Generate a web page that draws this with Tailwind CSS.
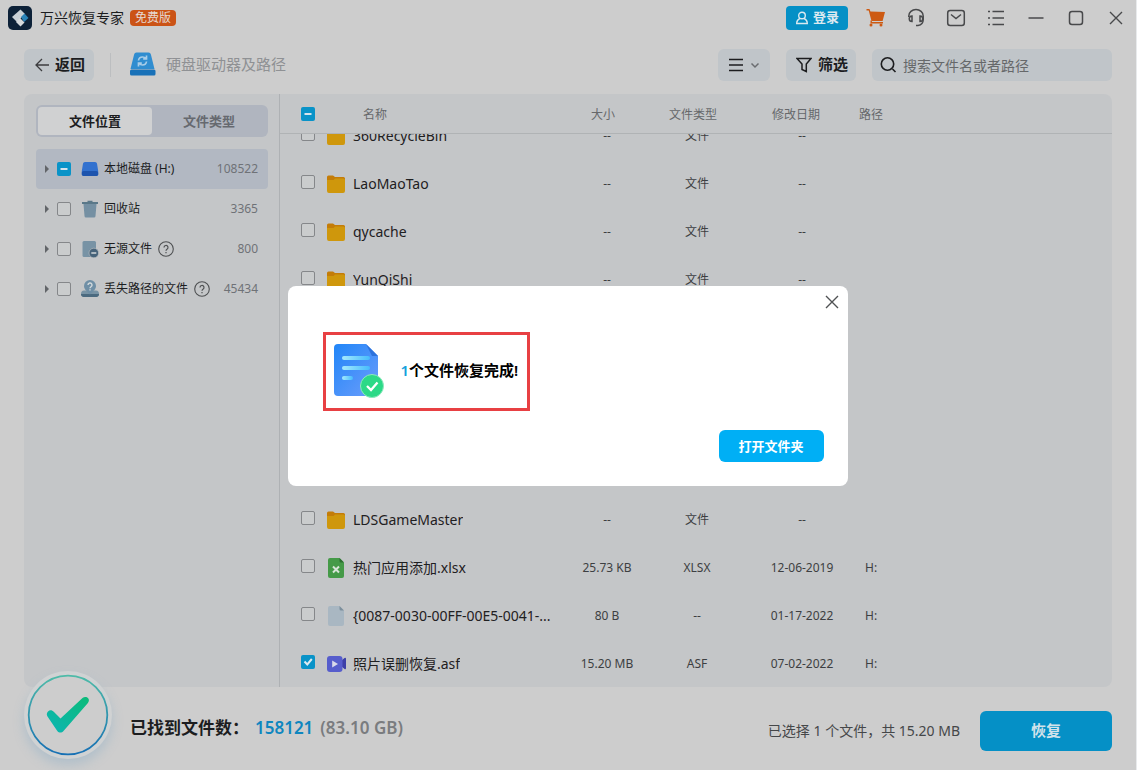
<!DOCTYPE html>
<html lang="zh-CN">
<head>
<meta charset="utf-8">
<meta name="viewport" content="width=device-width, initial-scale=1">
<title>万兴恢复专家</title>
<script src="https://cdn.jsdelivr.net/npm/@tailwindcss/browser@4"></script>
</head>
<body class="relative flex h-screen flex-col overflow-hidden border-r border-[#e8eaec] bg-[#cdcdcd] font-['Noto_Sans','Noto_Sans_CJK_SC',sans-serif] text-sm text-[#1c1d1f]">

<svg class="hidden" aria-hidden="true">
  <symbol id="folder" viewBox="0 0 18 18"><path d="M0 2a1.500 1.500 0 0 1 1.500-1.500H6L8 2h8.500A1.500 1.500 0 0 1 18 3.500V9H0z" fill="#c47c08"/><path d="M0 5h6.500l1.500-1.500h8.500a1.500 1.500 0 0 1 1.500 1.500V16a2 2 0 0 1-2 2H2a2 2 0 0 1-2-2z" fill="#cf970c"/></symbol>
  <symbol id="minus" viewBox="0 0 14 14"><path d="M3.500 7h7" stroke="#d5e4ec" stroke-width="1.800" fill="none"/></symbol>
  <symbol id="help" viewBox="0 0 16 16"><circle cx="8" cy="8" r="7.300" fill="none" stroke="#4e5052" stroke-width="1.100"/><path d="M6 6.500a2 2 0 1 1 3 1.700c-.7.500-1 .8-1 1.600M8 11v1.200" fill="none" stroke="#4e5052" stroke-width="1.200"/></symbol>
</svg>

<header class="flex h-[35px] shrink-0 items-center justify-between pr-3 pl-2">
  <div class="flex items-center">
    <svg class="size-6" viewBox="0 0 24 24"><rect width="24" height="24" rx="5" fill="#0d2138"/><path d="M12.500 3.500 17 8l-8 8-5-5z" fill="#c9d0d6"/><path d="m13 11 3.500-3.500L20.500 12 16 16z" fill="#2b83b8"/><path d="m12 12 4.500 4.500-4 4L8 16z" fill="#d6dadd"/></svg>
    <h1 class="ml-2 text-sm">万兴恢复专家</h1>
    <span class="ml-1.5 flex h-4 items-center rounded-sm bg-[#cb5316] px-[5px] text-xs text-[#e6d9d2]">免费版</span>
  </div>
  <div class="flex items-center text-[#48494b]">
    <button class="mr-[18px] flex h-6 w-[62px] items-center justify-center gap-1 rounded bg-[#0590c6] text-[13px] font-semibold text-[#dbe9f0]">
      <svg class="size-3.5" viewBox="0 0 14 14" fill="none" stroke="currentColor" stroke-width="1.400"><circle cx="7" cy="4.500" r="3.300"/><path d="M5 7.500c-2 .8-3.300 2.300-3.300 5h10.600c0-2.700-1.300-4.200-3.300-5"/></svg>登录</button>
    <button aria-label="购物车" class="mr-5"><svg class="size-5" viewBox="0 0 20 20" fill="#cd5a13"><path d="M.5 1h3l.9 2.500 14.600.500-2.400 9H5.500L2.700 2.400H.5z"/><path d="M4.500 12.500h1.200l.3 1.500h11v1.500H4.500z"/><circle cx="5" cy="17" r="1.500"/><circle cx="15" cy="17" r="1.500"/></svg></button>
    <button aria-label="客服" class="mr-5"><svg class="size-5" viewBox="0 0 20 20" fill="none" stroke="currentColor" stroke-width="1.500"><path d="M2.800 9V8a7.200 6.500 0 0 1 14.400 0v3.500c0 3-2 5.500-5.200 6h-2"/><path d="M6 8v5.500a2.700 2.700 0 1 1 0-5.500zM14 8v5.500a2.700 2.700 0 1 0 0-5.500z" fill="#cdcdcd"/></svg></button>
    <button aria-label="邮件" class="mr-5"><svg class="size-5" viewBox="0 0 20 20" fill="none" stroke="currentColor" stroke-width="1.500"><rect x="1.700" y="2.500" width="16.600" height="15" rx="2.500"/><path d="m5 6.500 5 4 5-4"/></svg></button>
    <button aria-label="菜单" class="mr-5"><svg class="size-5" viewBox="0 0 20 20" fill="none" stroke="currentColor" stroke-width="1.600"><path d="M2 3.500h2M2 10h2M2 16.500h2M6.500 3.500H18M6.500 10H18M6.500 16.500H18"/></svg></button>
    <button aria-label="最小化" class="mr-5"><svg class="size-5" viewBox="0 0 20 20" fill="none" stroke="currentColor" stroke-width="1.500"><path d="M2.500 10h15"/></svg></button>
    <button aria-label="最大化" class="mr-5"><svg class="size-5" viewBox="0 0 20 20" fill="none" stroke="currentColor" stroke-width="1.500"><rect x="3.500" y="3.500" width="13" height="13" rx="2.500"/></svg></button>
    <button aria-label="关闭" class="-mr-0.5"><svg class="size-5" viewBox="0 0 20 20" fill="none" stroke="currentColor" stroke-width="1.400"><path d="m4 4 12 12M16 4 4 16"/></svg></button>
  </div>
</header>

<nav class="flex h-[59px] shrink-0 items-center px-6">
  <button class="flex h-8 w-[70px] items-center justify-center gap-1.5 rounded-md bg-[#c0c5c9] pl-0.5 text-[15px] font-semibold">
    <svg class="size-3.5" viewBox="0 0 14 14" fill="none" stroke="#3c3d3f" stroke-width="1.300"><path d="M7 1 1 7l6 6M1 7h13"/></svg>返回</button>
  <span class="mx-4 h-6 w-px bg-[#bcbec0]"></span>
  <div class="ml-0.5 flex items-center gap-2.5">
    <svg class="size-[27px]" viewBox="0 0 27 27"><path d="M7.500 1.500h12a2.500 2.500 0 0 1 2.400 2l3.600 14.500H1.500L5.100 3.500a2.500 2.500 0 0 1 2.400-2z" fill="#308dd0"/><rect x="1" y="18.500" width="25.500" height="6" rx="1.500" fill="#1971b8"/><path d="M9.500 9.500c.3-2.500 2-3.500 4-3.500 1.300 0 2.500.5 3.500 1.500M17.500 4.500v3.300h-3.300M17.500 10.500c-.3 2.500-2 3.500-4 3.500-1.300 0-2.500-.5-3.500-1.500M9.500 15.500v-3.300h3.300" fill="none" stroke="#a8cde8" stroke-width="1.700"/></svg>
    <span class="pt-px text-[15px] text-[#8f9194]">硬盘驱动器及路径</span>
  </div>
  <div class="ml-auto flex items-center gap-4">
    <button aria-label="视图" class="flex h-8 w-[52px] items-center justify-center gap-1.5 rounded-md bg-[#c0c5c9]">
      <svg class="size-4" viewBox="0 0 16 16" stroke="#1c1d1f" stroke-width="1.600"><path d="M1 2.500h14M1 8h14M1 13.500h14"/></svg>
      <svg class="size-2.5" viewBox="0 0 10 10" fill="none" stroke="#6b6d70" stroke-width="1.500"><path d="m1.500 3.500 3.500 3.500 3.500-3.500"/></svg></button>
    <button class="flex h-8 w-[70px] items-center justify-center gap-1.5 rounded-md bg-[#c0c5c9] pl-0.5 text-[15px] font-semibold">
      <svg class="size-4" viewBox="0 0 16 16" fill="none" stroke="#1c1d1f" stroke-width="1.500"><path d="M1 1.500h14L10.300 7v7.500L6 12.500V7z"/></svg>筛选</button>
    <label class="flex h-8 w-60 items-center rounded-md bg-[#c0c5c9] pl-2">
      <svg class="size-[17px]" viewBox="0 0 17 17" fill="none" stroke="#1c1d1f" stroke-width="1.600"><circle cx="7.500" cy="8" r="6.200"/><path d="m12.500 13 3 3"/></svg>
      <input type="text" aria-label="搜索" placeholder="搜索文件名或者路径" class="ml-1.5 h-full min-w-0 flex-1 bg-transparent pt-px text-sm outline-none placeholder:text-[#66686a]">
    </label>
  </div>
</nav>

<main class="mx-6 flex min-h-0 flex-1 overflow-hidden rounded-lg bg-[#c4c6c8]">
  <aside class="w-64 shrink-0 border-r border-[#aeb1b4] pt-[11px] pr-[11px] pl-3">
    <div class="flex h-8 rounded-md bg-[#b0b5bf] p-0.5 text-[13px] font-semibold">
      <button class="flex-1 rounded bg-[#d0d1d2]">文件位置</button>
      <button class="flex-1 text-[#66696f]">文件类型</button>
    </div>
    <ul class="mt-3 text-xs">
      <li class="flex h-10 items-center rounded bg-[#b2b8c2] pr-2.5 pl-2">
        <svg class="size-2 shrink-0" viewBox="0 0 8 8" fill="#626569"><path d="M1 0v8l4-4z"/></svg>
        <label class="flex flex-1 items-center"><span class="ml-[5px] grid size-3.5 place-items-center"><input type="checkbox" checked class="col-start-1 row-start-1 size-3.5 appearance-none rounded-xs bg-[#0993c8]"><svg class="pointer-events-none col-start-1 row-start-1 size-3.5"><use href="#minus"/></svg></span>
        <svg class="mr-[5px] ml-2.5 size-[18px]" viewBox="0 0 18 18"><path d="M4 2h10a2 2 0 0 1 2 1.600L17.200 11v3a2 2 0 0 1-2 2H2.800a2 2 0 0 1-2-2v-3L2 3.600A2 2 0 0 1 4 2z" fill="#3271cf"/><rect x=".8" y="11" width="16.400" height="5" rx="1.800" fill="#1d54ae"/></svg>
        <span>本地磁盘 (H:)</span></label><span class="text-[#6f7277]">108522</span>
      </li>
      <li class="flex h-10 items-center pr-2.5 pl-2">
        <svg class="size-2 shrink-0" viewBox="0 0 8 8" fill="#626569"><path d="M1 0v8l4-4z"/></svg>
        <label class="flex flex-1 items-center"><input type="checkbox" class="ml-[5px] size-3.5 appearance-none rounded-xs border border-[#85878a] bg-[#cacccd]">
        <svg class="mr-[5px] ml-2.5 size-[18px]" viewBox="0 0 18 18"><path d="M1 2h5.500V.8h5V2H17v2H1z" fill="#5a7889"/><path d="M2.500 4h13l-1 12a1.500 1.500 0 0 1-1.500 1.500H5A1.500 1.500 0 0 1 3.500 16z" fill="#7590a3"/></svg>
        <span>回收站</span></label><span class="text-[#6f7277]">3365</span>
      </li>
      <li class="flex h-10 items-center pr-2.5 pl-2">
        <svg class="size-2 shrink-0" viewBox="0 0 8 8" fill="#626569"><path d="M1 0v8l4-4z"/></svg>
        <label class="flex items-center"><input type="checkbox" class="ml-[5px] size-3.5 appearance-none rounded-xs border border-[#85878a] bg-[#cacccd]">
        <svg class="mr-[5px] ml-2.5 size-[18px]" viewBox="0 0 18 18"><rect x="1.500" y="1" width="13.500" height="16" rx="1.500" fill="#7893a5"/><circle cx="12.800" cy="13" r="4.800" fill="#47637a" stroke="#c4c6c8" stroke-width=".6"/><path d="M10.300 13h5" stroke="#d0d6da" stroke-width="1.500"/></svg>
        <span>无源文件</span></label>
        <svg class="ml-1.5 size-4" role="img" aria-label="帮助"><use href="#help"/></svg><span class="ml-auto text-[#6f7277]">800</span>
      </li>
      <li class="flex h-10 items-center pr-2.5 pl-2">
        <svg class="size-2 shrink-0" viewBox="0 0 8 8" fill="#626569"><path d="M1 0v8l4-4z"/></svg>
        <label class="flex items-center"><input type="checkbox" class="ml-[5px] size-3.5 appearance-none rounded-xs border border-[#85878a] bg-[#cacccd]">
        <svg class="mr-[5px] ml-2.5 size-[18px]" viewBox="0 0 18 18"><path d="M3 10.500h12a3.500 3.500 0 0 1 3 3.500H0a3.500 3.500 0 0 1 3-3.500z" fill="#7893a5"/><path d="M0 14h18a2.500 2.500 0 0 1-2.500 3h-13A2.500 2.500 0 0 1 0 14z" fill="#4b6a80"/><path d="M9 0a6 6 0 0 1 6 6c0 3-2.200 4.500-6 8.500C5.200 10.500 3 9 3 6a6 6 0 0 1 6-6z" fill="#6f8fa6"/><path d="M7 5a2 2 0 1 1 3 1.700c-.7.500-1 .8-1 1.600M9 9.300v1.300" stroke="#d3d9dc" stroke-width="1.400" fill="none"/></svg>
        <span>丢失路径的文件</span></label>
        <svg class="ml-1.5 size-4" role="img" aria-label="帮助"><use href="#help"/></svg><span class="ml-auto text-[#6f7277]">45434</span>
      </li>
    </ul>
  </aside>

  <section class="flex min-w-0 flex-1 flex-col overflow-hidden">
    <div class="shrink-0 border-b border-[#b0b3b5]">
    <table class="w-full table-fixed text-xs text-[#66686b]">
      <colgroup><col class="w-[47px]"><col class="w-[240px]"><col class="w-20"><col class="w-[100px]"><col class="w-[110px]"><col></colgroup>
      <thead><tr class="h-[39px]">
        <th class="pl-[21px] font-normal"><label class="grid size-3.5 place-items-center"><input type="checkbox" checked aria-label="全选" class="col-start-1 row-start-1 size-3.5 appearance-none rounded-xs bg-[#0993c8]"><svg class="pointer-events-none col-start-1 row-start-1 size-3.5"><use href="#minus"/></svg></label></th>
        <th class="pt-0.5 pl-9 text-left font-normal">名称</th><th class="pt-0.5 pr-2 font-normal">大小</th><th class="pt-0.5 pr-2 font-normal">文件类型</th><th class="pt-0.5 pr-3 font-normal">修改日期</th><th class="pt-0.5 pl-0.5 text-left font-normal">路径</th>
      </tr></thead>
    </table>
    </div>
    <div class="min-h-0 flex-1 overflow-hidden">
      <table class="-mt-[22px] w-full table-fixed text-center text-xs text-[#3d3f42]">
        <colgroup><col class="w-[47px]"><col class="w-[240px]"><col class="w-20"><col class="w-[100px]"><col class="w-[110px]"><col></colgroup>
        <tbody>
          <tr class="h-12"><td class="pb-1 pl-[21px]"><input type="checkbox" id="f1" class="block size-3.5 appearance-none rounded-xs border border-[#85878a] bg-[#cacccd]"></td><td><label for="f1" class="flex items-center gap-2 text-sm text-[#1f2022]"><svg class="size-[18px] shrink-0"><use href="#folder"/></svg><span class="truncate">360RecycleBin</span></label></td><td>--</td><td>文件</td><td>--</td><td></td></tr>
          <tr class="h-12"><td class="pb-1 pl-[21px]"><input type="checkbox" id="f2" class="block size-3.5 appearance-none rounded-xs border border-[#85878a] bg-[#cacccd]"></td><td><label for="f2" class="flex items-center gap-2 text-sm text-[#1f2022]"><svg class="size-[18px] shrink-0"><use href="#folder"/></svg><span class="truncate">LaoMaoTao</span></label></td><td>--</td><td>文件</td><td>--</td><td></td></tr>
          <tr class="h-12"><td class="pb-1 pl-[21px]"><input type="checkbox" id="f3" class="block size-3.5 appearance-none rounded-xs border border-[#85878a] bg-[#cacccd]"></td><td><label for="f3" class="flex items-center gap-2 text-sm text-[#1f2022]"><svg class="size-[18px] shrink-0"><use href="#folder"/></svg><span class="truncate">qycache</span></label></td><td>--</td><td>文件</td><td>--</td><td></td></tr>
          <tr class="h-12"><td class="pb-1 pl-[21px]"><input type="checkbox" id="f4" class="block size-3.5 appearance-none rounded-xs border border-[#85878a] bg-[#cacccd]"></td><td><label for="f4" class="flex items-center gap-2 text-sm text-[#1f2022]"><svg class="size-[18px] shrink-0"><use href="#folder"/></svg><span class="truncate">YunQiShi</span></label></td><td>--</td><td>文件</td><td>--</td><td></td></tr>
          <tr class="h-48" aria-hidden="true"><td colspan="6"></td></tr>
          <tr class="h-12"><td class="pb-1 pl-[21px]"><input type="checkbox" id="f5" class="block size-3.5 appearance-none rounded-xs border border-[#85878a] bg-[#cacccd]"></td><td><label for="f5" class="flex items-center gap-2 text-sm text-[#1f2022]"><svg class="size-[18px] shrink-0"><use href="#folder"/></svg><span class="truncate">LDSGameMaster</span></label></td><td>--</td><td>文件</td><td>--</td><td></td></tr>
          <tr class="h-12"><td class="pb-1 pl-[21px]"><input type="checkbox" id="f6" class="block size-3.5 appearance-none rounded-xs border border-[#85878a] bg-[#cacccd]"></td><td><label for="f6" class="flex items-center gap-2 text-sm text-[#1f2022]"><svg class="h-5 w-[18px] shrink-0" viewBox="0 0 18 20"><path d="M3 0h9.500L17 4.500V18a2 2 0 0 1-2 2H3a2 2 0 0 1-2-2V2a2 2 0 0 1 2-2z" fill="#459a48"/><path d="M12.500 0 17 4.500h-3a1.500 1.500 0 0 1-1.500-1.500z" fill="#2c6f30"/><path d="m6 8.500 6 6m0-6-6 6" stroke="#d8e4d8" stroke-width="2"/></svg><span class="truncate">热门应用添加.xlsx</span></label></td><td>25.73 KB</td><td>XLSX</td><td>12-06-2019</td><td class="pl-2 text-left">H:</td></tr>
          <tr class="h-12"><td class="pb-1 pl-[21px]"><input type="checkbox" id="f7" class="block size-3.5 appearance-none rounded-xs border border-[#85878a] bg-[#cacccd]"></td><td><label for="f7" class="flex items-center gap-2 text-sm text-[#1f2022]"><svg class="h-5 w-[18px] shrink-0" viewBox="0 0 18 20"><path d="M3 0h9.500L17 4.500V18a2 2 0 0 1-2 2H3a2 2 0 0 1-2-2V2a2 2 0 0 1 2-2z" fill="#a9b7c2"/><path d="M12.500 0 17 4.500h-3a1.500 1.500 0 0 1-1.500-1.500z" fill="#7d8f9c"/></svg><span class="truncate">{0087-0030-00FF-00E5-0041-...</span></label></td><td>80 B</td><td>--</td><td>01-17-2022</td><td class="pl-2 text-left">H:</td></tr>
          <tr class="h-12"><td class="pb-1 pl-[21px]"><span class="grid size-3.5 place-items-center"><input type="checkbox" checked id="f8" class="col-start-1 row-start-1 size-3.5 appearance-none rounded-xs bg-[#0993c8]"><svg class="pointer-events-none col-start-1 row-start-1 size-3.5" viewBox="0 0 14 14" fill="none" stroke="#dcebf2" stroke-width="2"><path d="m3.500 6.500 2.800 3 4.500-5.500"/></svg></span></td><td><label for="f8" class="flex items-center gap-2 text-sm text-[#1f2022]"><svg class="size-[18px] shrink-0 overflow-visible" viewBox="0 0 18 18"><path d="m14 6 3.500-3a1 1 0 0 1 1.500.8v9.400a1 1 0 0 1-1.500.8L14 11z" fill="#3c3fa8"/><rect y="1" width="15.500" height="16" rx="3" fill="#565dcc"/><path d="M5.200 5.500v7l5.800-3.500z" fill="#d9daea"/></svg><span class="truncate">照片误删恢复.asf</span></label></td><td>15.20 MB</td><td>ASF</td><td>07-02-2022</td><td class="pl-2 text-left">H:</td></tr>
        </tbody>
      </table>
    </div>
  </section>
</main>

<footer class="flex h-[83px] shrink-0 items-center px-6 pt-1">
  <svg class="-mt-8 size-[88px] shrink-0 rounded-full bg-[#d0d2d3] shadow-[0_6px_12px_#b0bfca]" viewBox="0 0 88 88" fill="none"><defs><linearGradient id="ring" x1="0" y1="0" x2="0" y2="1"><stop stop-color="#4ebba8"/><stop offset="1" stop-color="#1770b4"/></linearGradient><linearGradient id="tick" x1="1" y1="0" x2="0" y2="1"><stop stop-color="#0cbb78"/><stop offset="1" stop-color="#0cb5b5"/></linearGradient></defs><circle cx="44" cy="44" r="39.300" fill="#cdcdcd" stroke="url(#ring)" stroke-width="1.800"/><path d="M24 40.500c2-2 4-1.500 6 .5l6.500 6.500 22-20.500c2-1.800 4.500-1.200 5.700.2s.8 3.600-.5 5L39.500 60c-1.800 2-4.500 2-6.200 0L23.500 45.500c-1-1.700-1-3.500.5-5z" fill="url(#tick)"/></svg>
  <p class="ml-[18px] flex whitespace-pre pb-1 text-[17px] font-semibold"><span>已找到文件数：</span><span class="ml-1.5 text-[#0f86bf]">158121</span><span class="ml-[7px] text-[#7a7c7f]">(83.10 GB)</span></p>
  <p class="mr-5 ml-auto text-sm text-[#454749]">已选择 1 个文件，共 15.20 MB</p>
  <button class="h-10 w-[132px] rounded-md bg-[#0590c6] text-[15px] font-semibold text-[#d3e3eb]">恢复</button>
</footer>

<!-- Recovery finished dialog -->
<div class="fixed inset-0 flex items-center justify-center pt-0.5 pr-0.5">
  <div role="dialog" aria-modal="true" aria-labelledby="done" class="flex h-[200px] w-[560px] flex-col rounded-lg bg-white px-6 pt-1.5 pb-6">
    <button aria-label="关闭" class="-mr-[18px] self-end"><svg class="size-5" viewBox="0 0 20 20" fill="none" stroke="#505254" stroke-width="1.400"><path d="m4 4 12 12M16 4 4 16"/></svg></button>
    <div class="mt-5 ml-[11px] flex h-[79px] w-[207px] items-center border-3 border-[#e84043] pb-0.5 pl-2">
      <svg class="h-[54px] w-[50px]" viewBox="0 0 50 54"><defs><linearGradient id="doc" x1="0" y1="0" x2="1" y2="1"><stop stop-color="#2186f8"/><stop offset="1" stop-color="#6d9dfb"/></linearGradient><linearGradient id="line"><stop stop-color="#a5eafd"/><stop offset="1" stop-color="#46bcfd"/></linearGradient></defs><path d="M4 0h28l12 12v36a4 4 0 0 1-4 4H4a4 4 0 0 1-4-4V4a4 4 0 0 1 4-4z" fill="url(#doc)"/><path d="m32 0 12 12h-6z" fill="#2d72dc"/><rect x="8" y="12" width="28" height="4" rx="2" fill="url(#line)"/><rect x="8" y="22" width="28" height="4" rx="2" fill="url(#line)"/><rect x="8" y="32" width="11" height="4" rx="2" fill="url(#line)"/><circle cx="38" cy="42" r="11.500" fill="#2cd987" stroke="#8fe9bd" stroke-width="1"/><path d="m33 42 4 4 6.500-7.500" fill="none" stroke="#fff" stroke-width="2.300"/></svg>
      <p id="done" class="ml-[17px] whitespace-nowrap text-[15px] font-semibold text-black"><span class="text-[#15a0dc]">1</span>个文件恢复完成!</p>
    </div>
    <button class="mt-auto h-8 w-[105px] self-end rounded-md bg-[#00aff5] text-[13px] font-semibold text-white">打开文件夹</button>
  </div>
</div>
<div class="absolute top-[136px] right-0 -mr-px h-[38px] w-px bg-[#4a90d9]"></div>
</body>
</html>
